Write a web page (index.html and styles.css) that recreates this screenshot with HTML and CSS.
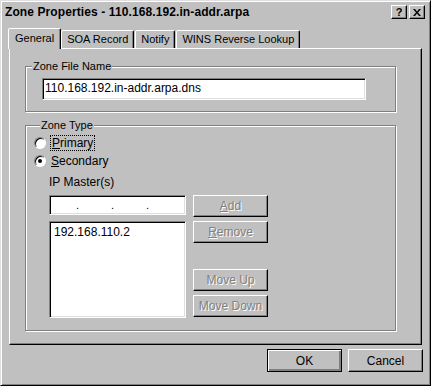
FILE: index.html
```html
<!DOCTYPE html>
<html lang="en">
<head>
    <meta charset="UTF-8">
    <title>Zone Properties</title>
    <link rel="stylesheet" href="styles.css">
</head>
<body>
    <div class="window">
        <!-- Title bar -->
        <div class="titlebar">
            <span class="title">Zone Properties - 110.168.192.in-addr.arpa</span>
            <div class="title-buttons">
                <button class="tbtn">?</button>
                <button class="tbtn close">
                    <svg width="8" height="7" viewBox="0 0 8 7"><path d="M0 0h2l2 2.5L6 0h2L5 3.5 8 7H6L4 4.5 2 7H0l3-3.5z" fill="#000"/></svg>
                </button>
            </div>
        </div>

        <!-- Tabs -->
        <div class="tabs">
            <div class="tab active">General</div>
            <div class="tab">SOA Record</div>
            <div class="tab">Notify</div>
            <div class="tab">WINS Reverse Lookup</div>
        </div>

        <div class="panel">
            <fieldset class="group file-group">
                <legend>Zone File Name</legend>
                <div class="textbox file-name">110.168.192.in-addr.arpa.dns</div>
            </fieldset>

            <fieldset class="group type-group">
                <legend>Zone Type</legend>
                <div class="radio-row">
                    <span class="radio"></span>
                    <span class="focus"><u>P</u>rimary</span>
                </div>
                <div class="radio-row">
                    <span class="radio checked"></span>
                    <span class="radio-label"><u>S</u>econdary</span>
                </div>
                <div class="masters-label">IP Master(s)</div>
                <div class="masters">
                    <div class="masters-left">
                        <div class="textbox ip-box">
                            <span>.</span><span>.</span><span>.</span>
                        </div>
                        <div class="textbox list-box">192.168.110.2</div>
                    </div>
                    <div class="masters-right">
                        <button class="btn disabled"><u>A</u>dd</button>
                        <button class="btn disabled"><u>R</u>emove</button>
                        <button class="btn disabled spaced">Move Up</button>
                        <button class="btn disabled">Move Down</button>
                    </div>
                </div>
            </fieldset>
        </div>

        <div class="footer">
            <button class="btn default">OK</button>
            <button class="btn">Cancel</button>
        </div>
    </div>
</body>
</html>
```

FILE: styles.css
```css
body {
  margin: 0;
  padding: 0;
  background-color: #c0c0c0;
  font-family: "Liberation Sans", Arial, sans-serif;
  font-size: 11px;
  color: #000;
}

.window {
  width: 431px;
  height: 386px;
  box-sizing: border-box;
  background-color: #c0c0c0;
  border: 1px solid;
  border-color: #dfdfdf #000 #000 #dfdfdf;
  box-shadow: inset 1px 1px #fff, inset -1px -1px #808080;
  padding: 2px;
  display: flex;
  flex-direction: column;
}

/* Title bar */
.titlebar {
  height: 18px;
  display: flex;
  justify-content: space-between;
  align-items: center;
  padding: 0 3px 0 2px;
}

.title {
  font-weight: bold;
  font-size: 12px;
  letter-spacing: 0.1px;
}

.title-buttons {
  display: flex;
  gap: 2px;
}

.tbtn {
  width: 16px;
  height: 14px;
  padding: 0;
  margin: 0;
  background-color: #c0c0c0;
  border: 1px solid;
  border-color: #fff #000 #000 #fff;
  box-shadow: inset -1px -1px #808080;
  font-family: "Liberation Sans", Arial, sans-serif;
  font-weight: bold;
  font-size: 11px;
  line-height: 11px;
  display: flex;
  align-items: center;
  justify-content: center;
}

/* Tabs */
.tabs {
  display: flex;
  align-items: flex-end;
  margin-top: 7px;
  padding-left: 6px;
  height: 20px;
  position: relative;
  z-index: 1;
}

.tab {
  height: 17px;
  padding: 0 5px;
  line-height: 16px;
  background-color: #c0c0c0;
  border: 1px solid;
  border-bottom: none;
  border-color: #fff #000 transparent #fff;
  box-shadow: inset -1px 0 #808080;
  border-radius: 2px 2px 0 0;
  margin-right: 1px;
}

.tab.active {
  height: 20px;
  line-height: 18px;
  padding: 0 6px;
  margin-right: 0;
  margin-left: -1px;
  margin-bottom: -1px;
}

.panel {
  height: 297px;
  margin: 0 6px;
  box-sizing: border-box;
  border: 1px solid;
  border-color: #fff #000 #000 #fff;
  box-shadow: inset -1px -1px #808080;
  padding: 11px 25px 0 15px;
}

/* Group boxes */
.group {
  margin: 0;
  border: 1px solid #808080;
  box-shadow: inset 1px 1px #fff, 1px 1px #fff;
  padding: 0;
}

.group legend {
  padding: 0 1px;
  margin-left: 6px;
  background-color: #c0c0c0;
  line-height: 12px;
}

.file-group {
  height: 52px;
  box-sizing: border-box;
}

.file-group .file-name {
  margin: 6px 0 0 16px;
  width: 324px;
  height: 22px;
  line-height: 18px;
  padding-left: 2px;
  font-size: 12px;
}

.type-group {
  margin-top: 7px;
  height: 212px;
  box-sizing: border-box;
  padding-left: 8px;
}

.textbox {
  box-sizing: border-box;
  background-color: #fff;
  border: 1px solid;
  border-color: #808080 #fff #fff #808080;
  box-shadow: inset 1px 1px #000, inset -1px -1px #dfdfdf;
}

.radio-row {
  display: flex;
  align-items: center;
  height: 18px;
  margin-top: 3px;
}

.radio-row + .radio-row {
  margin-top: 0;
}

.radio {
  width: 12px;
  height: 12px;
  box-sizing: border-box;
  border-radius: 50%;
  background-color: #fff;
  border: 1px solid;
  border-color: #808080 #fff #fff #808080;
  box-shadow: inset 1px 1px #000;
  margin-right: 3px;
  display: flex;
  align-items: center;
  justify-content: center;
}

.radio.checked::after {
  content: "";
  width: 4px;
  height: 4px;
  border-radius: 50%;
  background-color: #000;
}

.focus {
  border: 1px dotted #000;
  padding: 0 1px;
  margin-left: 1px;
  line-height: 14px;
  font-size: 12px;
}

.radio-label {
  margin-left: 2px;
  font-size: 12px;
}

.masters-label {
  margin: 5px 0 0 15px;
  font-size: 12px;
}

.masters {
  display: flex;
  gap: 7px;
  margin: 6px 0 0 15px;
}

.masters-left {
  display: flex;
  flex-direction: column;
  gap: 6px;
}

.ip-box {
  width: 137px;
  height: 20px;
  display: flex;
  justify-content: space-around;
  padding: 0 20px 0 10px;
  line-height: 19px;
}

.list-box {
  width: 137px;
  height: 97px;
  padding: 3px 4px;
  font-size: 12px;
}

.masters-right {
  display: flex;
  flex-direction: column;
  gap: 4px;
}

/* Buttons */
.btn {
  width: 75px;
  height: 22px;
  margin: 0;
  padding: 0;
  background-color: #c0c0c0;
  border: 1px solid;
  border-color: #fff #000 #000 #fff;
  box-shadow: inset -1px -1px #808080;
  font-family: "Liberation Sans", Arial, sans-serif;
  font-size: 12px;
  color: #000;
}

.btn.disabled {
  color: #808080;
  text-shadow: 1px 1px #fff;
}

.btn.spaced {
  margin-top: 22px;
}

.btn.default {
  border: 1px solid #000;
  box-shadow: inset 1px 1px #fff, inset -2px -2px #808080, inset -1px -1px #000;
}

.footer {
  display: flex;
  justify-content: flex-end;
  gap: 6px;
  margin-top: 4px;
  padding-right: 5px;
}

.footer .btn {
  height: 23px;
}
```
